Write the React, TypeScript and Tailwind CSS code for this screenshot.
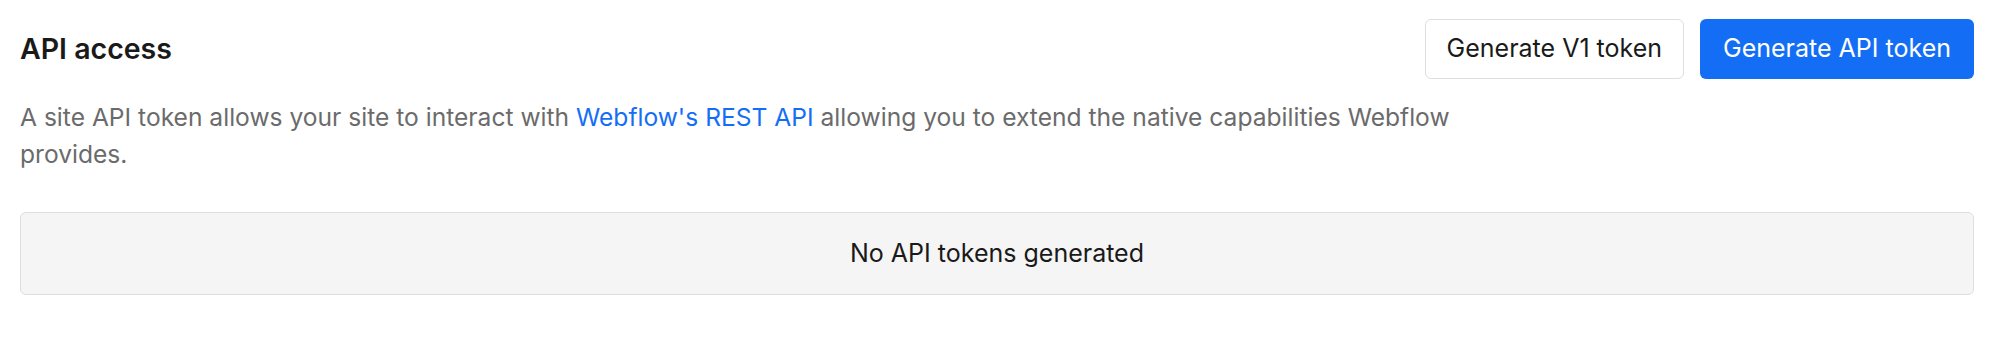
export default function App() {
  return (
    <div className="min-h-[340px] w-[1997px] bg-white pl-[20px] pr-[23px] pt-[19px] font-['Inter',sans-serif]">
      {/* Header row */}
      <div className="flex items-center justify-between">
        <h2 className="text-[28.5px] font-semibold leading-none text-[#1a1a1a]">API access</h2>
        <div className="flex items-center gap-[16px]">
          <button className="h-[60px] rounded-[6px] border border-[#dedede] bg-white px-[21px] text-[25px] text-[#1a1a1a]">
            Generate V1 token
          </button>
          <button className="h-[60px] rounded-[6px] bg-[#146ef5] px-[23px] text-[25px] text-white">
            Generate API token
          </button>
        </div>
      </div>

      {/* Description */}
      <p className="mt-[20px] max-w-[1500px] text-[24.6px] leading-[37px] text-[#6b6b6b]">
        A site API token allows your site to interact with{" "}
        <a className="text-[#146ef5]">Webflow's REST API</a> allowing you to extend the native capabilities Webflow
        provides.
      </p>

      {/* Empty state */}
      <div className="mt-[39px] flex h-[83px] items-center justify-center rounded-[6px] border border-[#dedede] bg-[#f5f5f5] text-[25px] text-[#1a1a1a]">
        No API tokens generated
      </div>
    </div>
  );
}
